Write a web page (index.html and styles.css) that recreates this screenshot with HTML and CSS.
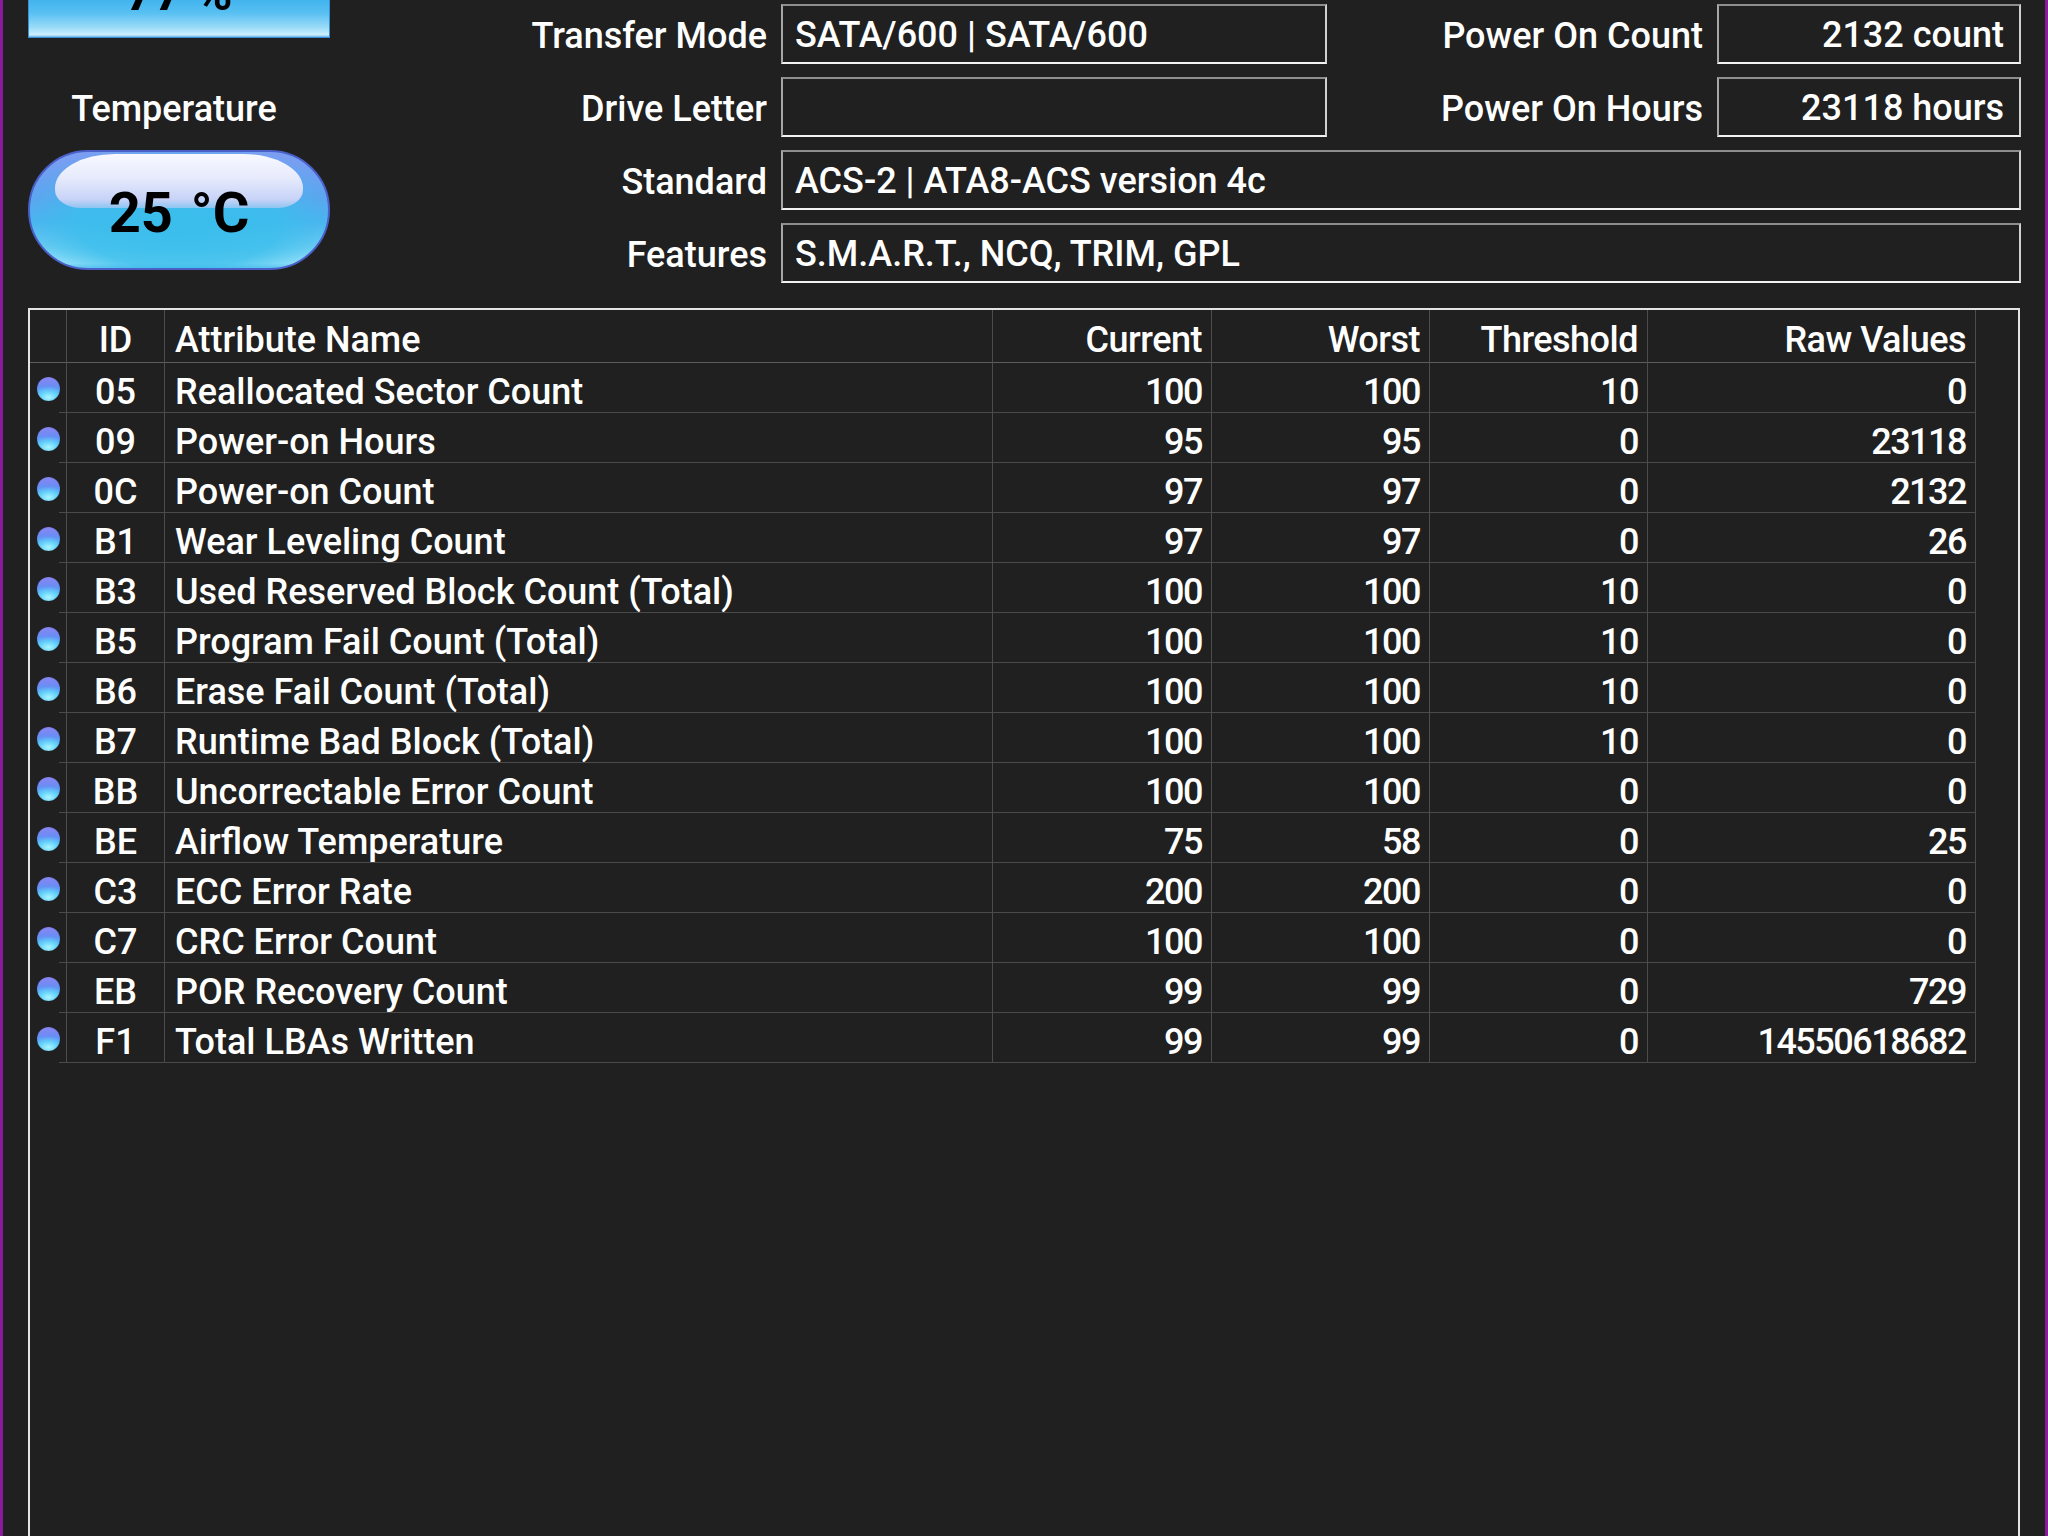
FILE: index.html
```html
<!DOCTYPE html>
<html>
<head>
<meta charset="utf-8">
<link rel="stylesheet" href="styles.css">
</head>
<body>
<div class="window">
  <div class="top">
    <div class="side">
      <div class="health"><div class="health-text">77 %</div></div>
      <div class="temp-label">Temperature</div>
      <div class="pill"><span class="pill-text">25 °C</span></div>
    </div>
    <div class="form">
      <div class="label">Transfer Mode</div>
      <div class="box">SATA/600 | SATA/600</div>
      <div class="label">Power On Count</div>
      <div class="box right">2132 count</div>

      <div class="label">Drive Letter</div>
      <div class="box"></div>
      <div class="label">Power On Hours</div>
      <div class="box right">23118 hours</div>

      <div class="label">Standard</div>
      <div class="box wide">ACS-2 | ATA8-ACS version 4c</div>

      <div class="label">Features</div>
      <div class="box wide">S.M.A.R.T., NCQ, TRIM, GPL</div>
    </div>
  </div>

  <div class="table">
    <div class="row head">
      <div class="c icon"></div>
      <div class="c id">ID</div>
      <div class="c name">Attribute Name</div>
      <div class="c num">Current</div>
      <div class="c num">Worst</div>
      <div class="c num">Threshold</div>
      <div class="c num">Raw Values</div>
    </div>
    <div class="row"><div class="c icon"><span class="dot"></span></div><div class="c id">05</div><div class="c name">Reallocated Sector Count</div><div class="c num">100</div><div class="c num">100</div><div class="c num">10</div><div class="c num">0</div></div>
    <div class="row"><div class="c icon"><span class="dot"></span></div><div class="c id">09</div><div class="c name">Power-on Hours</div><div class="c num">95</div><div class="c num">95</div><div class="c num">0</div><div class="c num">23118</div></div>
    <div class="row"><div class="c icon"><span class="dot"></span></div><div class="c id">0C</div><div class="c name">Power-on Count</div><div class="c num">97</div><div class="c num">97</div><div class="c num">0</div><div class="c num">2132</div></div>
    <div class="row"><div class="c icon"><span class="dot"></span></div><div class="c id">B1</div><div class="c name">Wear Leveling Count</div><div class="c num">97</div><div class="c num">97</div><div class="c num">0</div><div class="c num">26</div></div>
    <div class="row"><div class="c icon"><span class="dot"></span></div><div class="c id">B3</div><div class="c name">Used Reserved Block Count (Total)</div><div class="c num">100</div><div class="c num">100</div><div class="c num">10</div><div class="c num">0</div></div>
    <div class="row"><div class="c icon"><span class="dot"></span></div><div class="c id">B5</div><div class="c name">Program Fail Count (Total)</div><div class="c num">100</div><div class="c num">100</div><div class="c num">10</div><div class="c num">0</div></div>
    <div class="row"><div class="c icon"><span class="dot"></span></div><div class="c id">B6</div><div class="c name">Erase Fail Count (Total)</div><div class="c num">100</div><div class="c num">100</div><div class="c num">10</div><div class="c num">0</div></div>
    <div class="row"><div class="c icon"><span class="dot"></span></div><div class="c id">B7</div><div class="c name">Runtime Bad Block (Total)</div><div class="c num">100</div><div class="c num">100</div><div class="c num">10</div><div class="c num">0</div></div>
    <div class="row"><div class="c icon"><span class="dot"></span></div><div class="c id">BB</div><div class="c name">Uncorrectable Error Count</div><div class="c num">100</div><div class="c num">100</div><div class="c num">0</div><div class="c num">0</div></div>
    <div class="row"><div class="c icon"><span class="dot"></span></div><div class="c id">BE</div><div class="c name">Airflow Temperature</div><div class="c num">75</div><div class="c num">58</div><div class="c num">0</div><div class="c num">25</div></div>
    <div class="row"><div class="c icon"><span class="dot"></span></div><div class="c id">C3</div><div class="c name">ECC Error Rate</div><div class="c num">200</div><div class="c num">200</div><div class="c num">0</div><div class="c num">0</div></div>
    <div class="row"><div class="c icon"><span class="dot"></span></div><div class="c id">C7</div><div class="c name">CRC Error Count</div><div class="c num">100</div><div class="c num">100</div><div class="c num">0</div><div class="c num">0</div></div>
    <div class="row"><div class="c icon"><span class="dot"></span></div><div class="c id">EB</div><div class="c name">POR Recovery Count</div><div class="c num">99</div><div class="c num">99</div><div class="c num">0</div><div class="c num">729</div></div>
    <div class="row"><div class="c icon"><span class="dot"></span></div><div class="c id">F1</div><div class="c name">Total LBAs Written</div><div class="c num">99</div><div class="c num">99</div><div class="c num">0</div><div class="c num">14550618682</div></div>
  </div>
</div>
</body>
</html>
```

FILE: styles.css
```css
html, body {
  margin: 0;
  padding: 0;
  background: #202020;
}

.window {
  width: 2048px;
  height: 1536px;
  box-sizing: border-box;
  border-left: 3px solid #8a1c9c;
  border-right: 3px solid #8a1c9c;
  background: #202020;
  overflow: hidden;
  display: flex;
  flex-direction: column;
  font-family: Roboto, "Liberation Sans", sans-serif;
  font-size: 36px;
  font-weight: 500;
  color: #ffffff;
}

/* ---------- top area ---------- */
.top {
  display: flex;
  height: 283px;
}

.side {
  width: 302px;
  margin-left: 25px;
  display: flex;
  flex-direction: column;
}

.health {
  height: 38px;
  box-sizing: border-box;
  border: 1px solid #3a8ed6;
  border-top: none;
  background: linear-gradient(to bottom, #42b4ee 0%, #58c0f2 35%, #9cdcf8 75%, #cdf0ff 94%, #6ab4e6 100%);
  overflow: hidden;
  text-align: center;
}

.health-text {
  margin-top: -37px;
  line-height: 60px;
  font-size: 50px;
  font-weight: 700;
  color: #000;
}

.temp-label {
  margin-top: 49px;
  height: 44px;
  line-height: 44px;
  text-align: center;
  padding-right: 10px;
}

.pill {
  position: relative;
  margin-top: 19px;
  height: 120px;
  box-sizing: border-box;
  border-radius: 60px;
  border: 2px solid #4a60c8;
  background:
    radial-gradient(ellipse 62% 70% at 50% 62%, rgba(58,190,236,1) 0%, rgba(58,190,236,0.85) 55%, rgba(58,190,236,0) 100%),
    linear-gradient(to bottom, #7c9ef2 0%, #6a9cf0 40%, #54aef0 60%, #84d4f6 82%, #c4f2ff 96%, #7ac8f0 100%);
  display: flex;
  align-items: center;
  justify-content: center;
  overflow: hidden;
}

.pill::before {
  content: "";
  position: absolute;
  left: 25px;
  right: 25px;
  top: 2px;
  height: 54px;
  border-radius: 60px 60px 26px 26px / 34px 34px 18px 18px;
  background: linear-gradient(to bottom, #f8f8ff 0%, #e6eafc 45%, #c6d2f7 85%, rgba(190,205,245,0.6) 100%);
}

.pill-text {
  position: relative;
  font-size: 56px;
  font-weight: 700;
  color: #000;
  line-height: 1;
  margin-top: 6px;
  word-spacing: 4px;
}

/* ---------- form ---------- */
.form {
  display: grid;
  grid-template-columns: 451px 546px 390px 304px;
  grid-auto-rows: 60px;
  row-gap: 13px;
  padding-top: 4px;
}

.label {
  text-align: right;
  padding-right: 14px;
  padding-top: 3px;
  line-height: 58px;
  white-space: nowrap;
}

.box {
  box-sizing: border-box;
  border-style: solid;
  border-width: 2px;
  border-color: #8e8e8e #d0d0d0 #f2f2f2 #a6a6a6;
  padding: 3px 15px 0 12px;
  line-height: 53px;
  white-space: nowrap;
  overflow: hidden;
}

.box.right {
  text-align: right;
}

.box.wide {
  grid-column: 2 / 5;
}

/* ---------- table ---------- */
.table {
  margin-top: 25px;
  margin-left: 25px;
  width: 1992px;
  height: 1300px;
  flex: none;
  box-sizing: border-box;
  border: 2px solid #e4e4e4;
  border-bottom: none;
}

.row {
  display: grid;
  grid-template-columns: 37px 98px 828px 219px 218px 218px 328px;
  height: 50px;
}

.row.head {
  height: 53px;
}

.c {
  box-sizing: border-box;
  border-right: 1px solid #4c4c4c;
  border-bottom: 1px solid #4a4a4a;
  padding-top: 7px;
  line-height: 45px;
  white-space: nowrap;
  overflow: hidden;
}

.head .c {
  padding-top: 6px;
  line-height: 49px;
  border-bottom: 1px solid #5c5c5c;
}

.row:not(.head) .c.icon {
  border-bottom: none;
  padding-top: 0;
  background: linear-gradient(#4a4a4a, #4a4a4a) no-repeat right bottom / 7px 1px;
}

.icon {
  display: flex;
  align-items: center;
  padding-left: 7px;
}

.id {
  text-align: center;
}

.name {
  padding-left: 10px;
}

.num {
  text-align: right;
  padding-right: 9px;
  letter-spacing: -1.5px;
}

.head .num {
  letter-spacing: -0.5px;
}

.dot {
  display: block;
  width: 23px;
  height: 24px;
  border-radius: 50%;
  margin-top: 2px;
  background:
    radial-gradient(ellipse 70% 45% at 50% 85%, rgba(170,244,255,1) 0%, rgba(110,220,252,0.8) 50%, rgba(90,200,250,0) 100%),
    linear-gradient(to bottom, #8c86f2 0%, #6c8cf4 35%, #4cb0f6 70%, #6ad8fa 100%);
  box-shadow: inset 0 0 1px rgba(40,40,120,0.6);
}
```
